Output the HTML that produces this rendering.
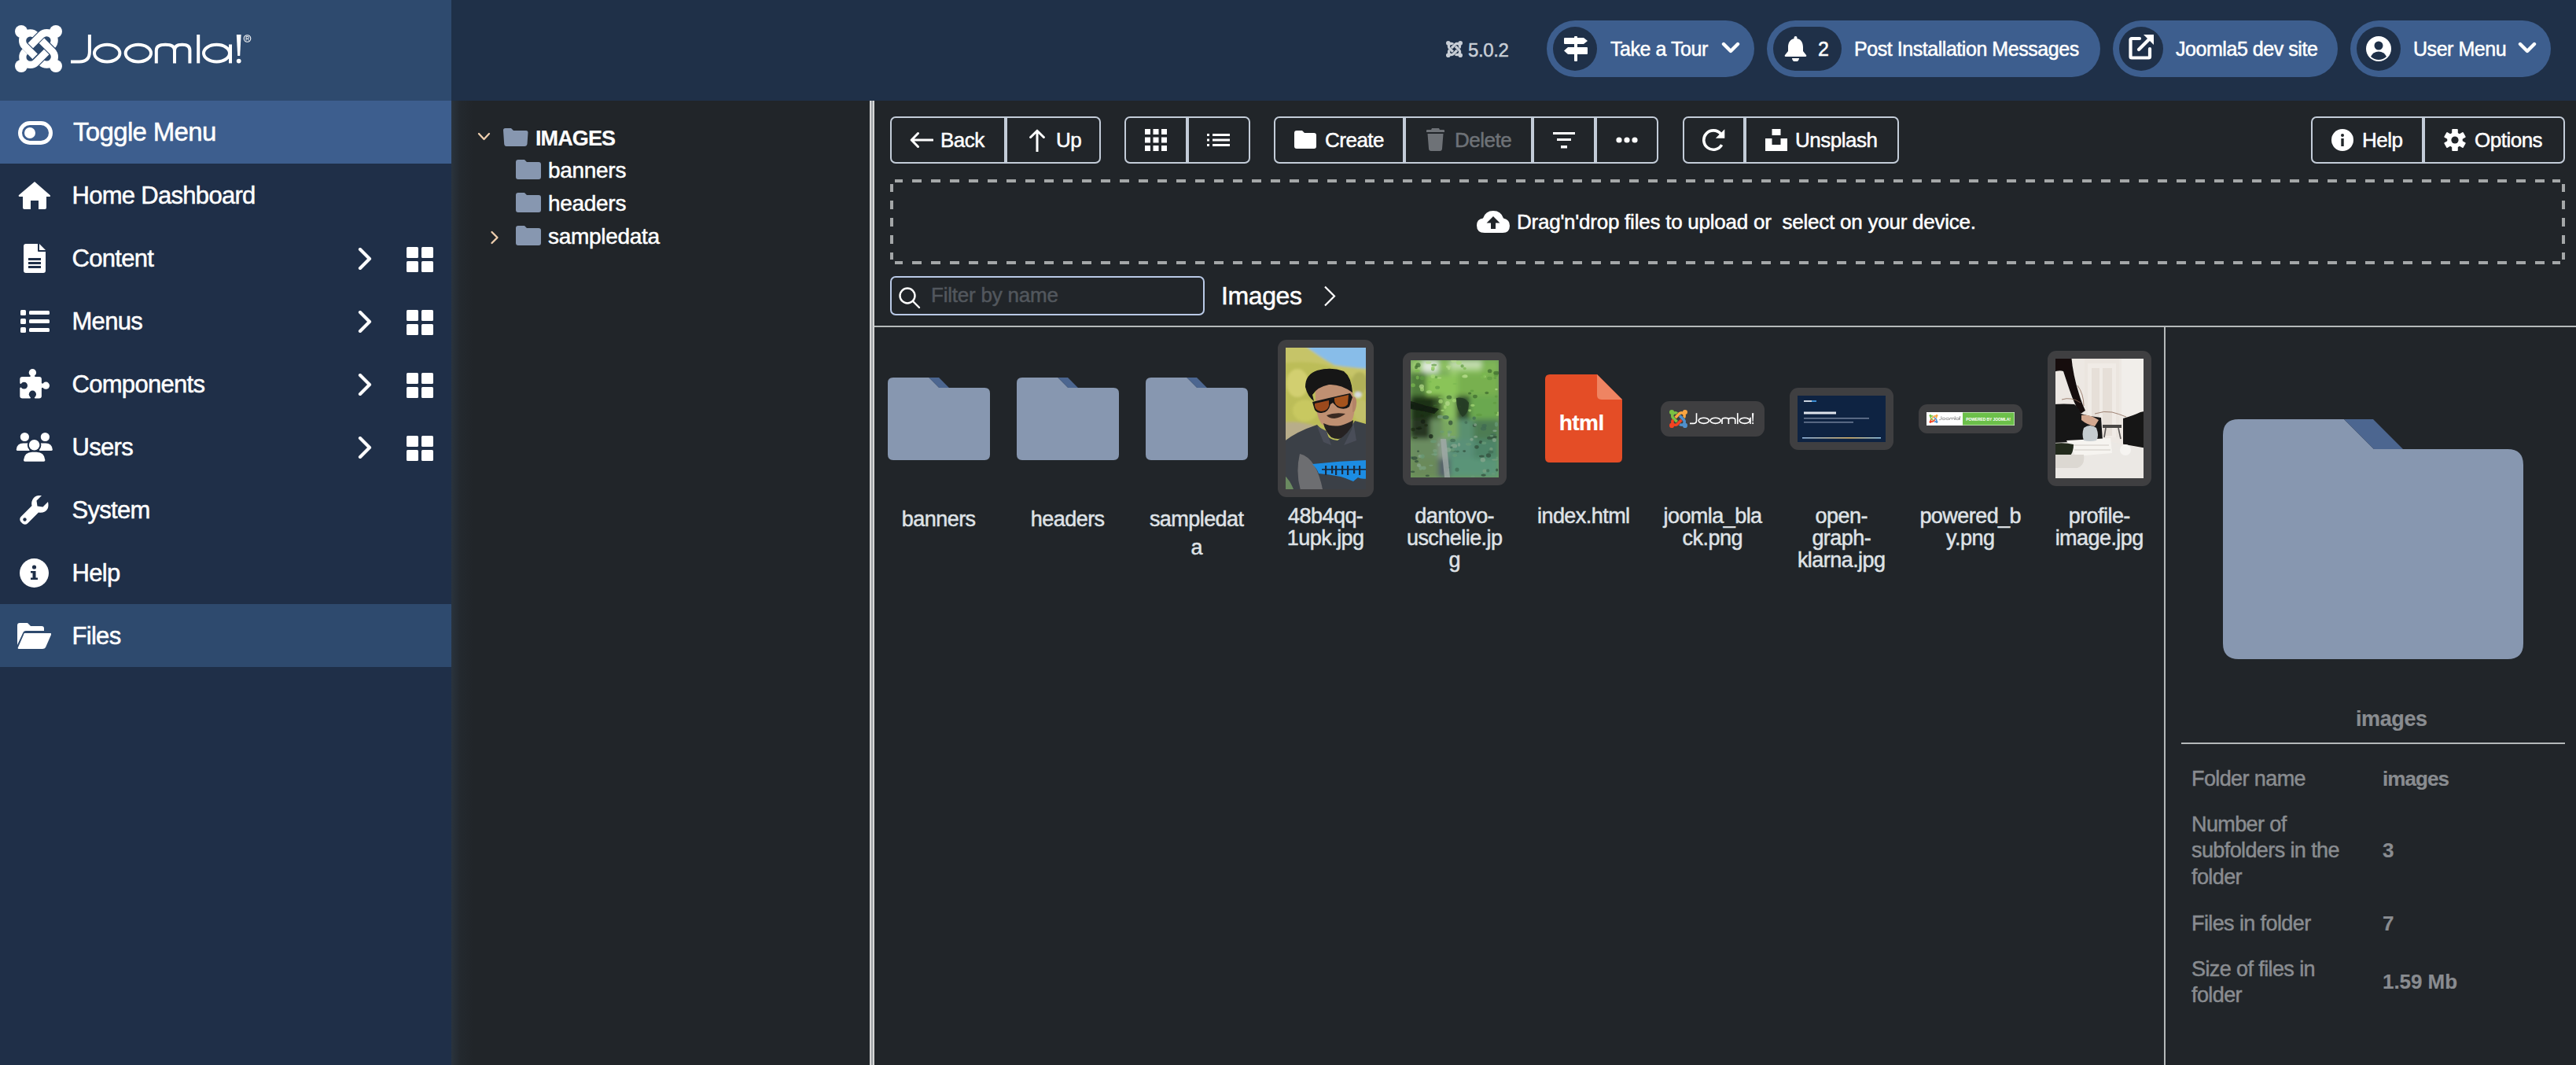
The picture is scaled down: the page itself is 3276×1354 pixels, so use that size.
<!DOCTYPE html><html><head><meta charset="utf-8"><style>
html,body{margin:0;padding:0;width:3276px;height:1354px;overflow:hidden;background:#212529;}
.r{position:absolute;display:block;}
.t{position:absolute;white-space:nowrap;font-family:"Liberation Sans",sans-serif;}
</style></head><body>
<div class="r" style="left:0px;top:0px;width:574px;height:128px;background:#2e4a6e;"></div>
<div class="r" style="left:574px;top:0px;width:2702px;height:128px;background:#1f3048;"></div>
<div class="r" style="left:0px;top:128px;width:574px;height:1226px;background:#1f2f48;"></div>
<div class="r" style="left:0px;top:128px;width:574px;height:80px;background:#3d5e8e;"></div>
<div class="r" style="left:0px;top:768px;width:574px;height:80px;background:#2e4a6e;"></div>
<div class="r" style="left:574px;top:128px;width:2702px;height:1226px;background:#212529;"></div>
<div class="r" style="left:574px;top:128px;width:28px;height:1226px;background:linear-gradient(90deg,rgba(62,84,108,.3),rgba(62,84,108,.08) 40%,rgba(62,84,108,0));"></div>
<svg class="r" style="left:19px;top:32px" width="60" height="60" viewBox="0 0 60 60"><g transform="rotate(0 30 30)"><path d="M12.6 26.4 L26 39.8" fill="none" stroke="#2e4a6e" stroke-width="12"/><path d="M26.5 12.8 A9.2 9.2 0 1 0 12.4 26.6 L26 40.2" fill="none" stroke="#fff" stroke-width="9.2"/></g><g transform="rotate(90 30 30)"><path d="M12.6 26.4 L26 39.8" fill="none" stroke="#2e4a6e" stroke-width="12"/><path d="M26.5 12.8 A9.2 9.2 0 1 0 12.4 26.6 L26 40.2" fill="none" stroke="#fff" stroke-width="9.2"/></g><g transform="rotate(180 30 30)"><path d="M12.6 26.4 L26 39.8" fill="none" stroke="#2e4a6e" stroke-width="12"/><path d="M26.5 12.8 A9.2 9.2 0 1 0 12.4 26.6 L26 40.2" fill="none" stroke="#fff" stroke-width="9.2"/></g><g transform="rotate(270 30 30)"><path d="M12.6 26.4 L26 39.8" fill="none" stroke="#2e4a6e" stroke-width="12"/><path d="M26.5 12.8 A9.2 9.2 0 1 0 12.4 26.6 L26 40.2" fill="none" stroke="#fff" stroke-width="9.2"/></g><g transform="rotate(0 30 30)"><circle cx="8" cy="8" r="8" fill="#fff"/></g><g transform="rotate(90 30 30)"><circle cx="8" cy="8" r="8" fill="#fff"/></g><g transform="rotate(180 30 30)"><circle cx="8" cy="8" r="8" fill="#fff"/></g><g transform="rotate(270 30 30)"><circle cx="8" cy="8" r="8" fill="#fff"/></g></svg>
<svg class="r" style="left:0px;top:0px" width="330" height="100" viewBox="0 0 330 100"><g fill="none" stroke="#fff" stroke-width="4" stroke-linecap="butt"><path d="M113.9 44 V66 Q113.9 78.4 101 78.4 H90"/><ellipse cx="136.2" cy="67.6" rx="16.2" ry="10.8"/><ellipse cx="175.85" cy="67.6" rx="16.2" ry="10.8"/><path d="M198.8 80.4 V64 Q198.8 56.8 210.4 56.8 Q222 56.8 222 64 V80.4 M222 64 Q222 56.8 231.7 56.8 Q241.4 56.8 241.4 64 V80.4"/><path d="M252.2 44 V80.4"/><ellipse cx="275.5" cy="67.6" rx="16.5" ry="10.8"/><path d="M293 56.5 V80.4"/></g><path d="M300.8 44 H306.6 L305.2 71 H302.2 Z" fill="#fff"/><circle cx="303.7" cy="77.6" r="2.9" fill="#fff"/><circle cx="314.5" cy="49" r="4.3" fill="none" stroke="#fff" stroke-width="1.1"/><path d="M313 51.6 V46.4 H315 Q316.6 46.4 316.6 47.8 Q316.6 49.1 315 49.1 H313 M315 49.1 L316.6 51.6" fill="none" stroke="#fff" stroke-width="0.9"/></svg>
<svg class="r" style="left:1839px;top:52px" width="21" height="21" viewBox="0 0 21 21"><g transform="scale(0.35)"><g transform="rotate(0 30 30)"><path d="M12.6 26.4 L26 39.8" fill="none" stroke="#1f3048" stroke-width="12"/><path d="M26.5 12.8 A9.2 9.2 0 1 0 12.4 26.6 L26 40.2" fill="none" stroke="#c8ced6" stroke-width="9.2"/></g><g transform="rotate(90 30 30)"><path d="M12.6 26.4 L26 39.8" fill="none" stroke="#1f3048" stroke-width="12"/><path d="M26.5 12.8 A9.2 9.2 0 1 0 12.4 26.6 L26 40.2" fill="none" stroke="#c8ced6" stroke-width="9.2"/></g><g transform="rotate(180 30 30)"><path d="M12.6 26.4 L26 39.8" fill="none" stroke="#1f3048" stroke-width="12"/><path d="M26.5 12.8 A9.2 9.2 0 1 0 12.4 26.6 L26 40.2" fill="none" stroke="#c8ced6" stroke-width="9.2"/></g><g transform="rotate(270 30 30)"><path d="M12.6 26.4 L26 39.8" fill="none" stroke="#1f3048" stroke-width="12"/><path d="M26.5 12.8 A9.2 9.2 0 1 0 12.4 26.6 L26 40.2" fill="none" stroke="#c8ced6" stroke-width="9.2"/></g><g transform="rotate(0 30 30)"><circle cx="8" cy="8" r="8" fill="#c8ced6"/></g><g transform="rotate(90 30 30)"><circle cx="8" cy="8" r="8" fill="#c8ced6"/></g><g transform="rotate(180 30 30)"><circle cx="8" cy="8" r="8" fill="#c8ced6"/></g><g transform="rotate(270 30 30)"><circle cx="8" cy="8" r="8" fill="#c8ced6"/></g></g></svg>
<div class="t" style="left:1867.0px;top:52px;font-size:24px;line-height:24px;color:#c8ced6;letter-spacing:-0.4px;-webkit-text-stroke:0.5px #c8ced6;">5.0.2</div>
<div class="r" style="left:1967px;top:26px;width:264px;height:72px;background:#3d5e8e;border-radius:36px;"></div>
<div class="r" style="left:1975px;top:34px;width:56px;height:56px;background:#1f3048;border-radius:28px;"></div>
<div class="r" style="left:2247px;top:26px;width:424px;height:72px;background:#3d5e8e;border-radius:36px;"></div>
<div class="r" style="left:2255px;top:34px;width:87px;height:56px;background:#1f3048;border-radius:28px;"></div>
<div class="r" style="left:2687px;top:26px;width:286px;height:72px;background:#3d5e8e;border-radius:36px;"></div>
<div class="r" style="left:2695px;top:34px;width:56px;height:56px;background:#1f3048;border-radius:28px;"></div>
<div class="r" style="left:2989px;top:26px;width:255px;height:72px;background:#3d5e8e;border-radius:36px;"></div>
<div class="r" style="left:2997px;top:34px;width:56px;height:56px;background:#1f3048;border-radius:28px;"></div>
<div class="t" style="left:2048.0px;top:50px;font-size:25px;line-height:25px;color:#fff;letter-spacing:-0.45px;-webkit-text-stroke:0.5px #fff;">Take a Tour</div>
<div class="t" style="left:2312.0px;top:50px;font-size:25px;line-height:25px;color:#fff;-webkit-text-stroke:0.5px #fff;">2</div>
<div class="t" style="left:2358.0px;top:50px;font-size:25px;line-height:25px;color:#fff;letter-spacing:-0.45px;-webkit-text-stroke:0.5px #fff;">Post Installation Messages</div>
<div class="t" style="left:2767.0px;top:50px;font-size:25px;line-height:25px;color:#fff;letter-spacing:-0.45px;-webkit-text-stroke:0.5px #fff;">Joomla5 dev site</div>
<div class="t" style="left:3069.0px;top:50px;font-size:25px;line-height:25px;color:#fff;letter-spacing:-0.45px;-webkit-text-stroke:0.5px #fff;">User Menu</div>
<svg class="r" style="left:2189px;top:53px" width="24" height="16" viewBox="0 0 24 16"><path d="M3 3 L12 12 L21 3" fill="none" stroke="#fff" stroke-width="4.4" stroke-linecap="round" stroke-linejoin="round"/></svg>
<svg class="r" style="left:3202px;top:53px" width="24" height="16" viewBox="0 0 24 16"><path d="M3 3 L12 12 L21 3" fill="none" stroke="#fff" stroke-width="4.4" stroke-linecap="round" stroke-linejoin="round"/></svg>
<svg class="r" style="left:1988px;top:46px" width="32" height="32" viewBox="0 0 32 32"><g fill="#fff"><rect x="14" y="0" width="4" height="32" rx="1"/><path d="M2 2 H26 L31 6 L26 10 H2 Q1 10 1 9 V3 Q1 2 2 2Z"/><path d="M30 14 H6 L1 18.5 L6 23 H30 Q31 23 31 22 V15 Q31 14 30 14Z"/></g></svg>
<svg class="r" style="left:2269px;top:46px" width="29" height="32" viewBox="0 0 29 32"><g fill="#fff"><rect x="12.5" y="0" width="4" height="5" rx="2"/><path d="M14.5 3 C7 3 5 9 5 14 V19 L1 24 Q0 26 2 26 H27 Q29 26 28 24 L24 19 V14 C24 9 22 3 14.5 3Z"/><path d="M10 28 H19 A4.5 4.5 0 0 1 10 28Z"/></g></svg>
<svg class="r" style="left:2707px;top:43px" width="33" height="33" viewBox="0 0 33 33"><g fill="none" stroke="#fff" stroke-width="4.2" stroke-linecap="round" stroke-linejoin="round"><path d="M14 6 H4 Q2.5 6 2.5 7.5 V29 Q2.5 30.5 4 30.5 H25.5 Q27 30.5 27 29 V19"/><path d="M13 20 L29 4"/></g><path d="M19 1 H32 V14 Z" fill="#fff"/></svg>
<svg class="r" style="left:3009px;top:46px" width="32" height="32" viewBox="0 0 32 32"><circle cx="16" cy="16" r="16" fill="#fff"/><circle cx="16" cy="12" r="5.5" fill="#1f3048"/><path d="M6 26 Q9 19.5 16 19.5 Q23 19.5 26 26 Q21.5 30 16 30 Q10.5 30 6 26Z" fill="#1f3048"/></svg>
<div class="t" style="left:93.0px;top:151px;font-size:33px;line-height:33px;color:#fff;letter-spacing:-0.66px;-webkit-text-stroke:0.5px #fff;">Toggle Menu</div>
<div class="t" style="left:91.5px;top:233px;font-size:31px;line-height:31px;color:#fff;letter-spacing:-0.7px;-webkit-text-stroke:0.5px #fff;">Home Dashboard</div>
<div class="t" style="left:91.5px;top:313px;font-size:31px;line-height:31px;color:#fff;letter-spacing:-0.7px;-webkit-text-stroke:0.5px #fff;">Content</div>
<svg class="r" style="left:455px;top:315px" width="18" height="28" viewBox="0 0 18 28"><path d="M3 2 L15 14 L3 26" fill="none" stroke="#fff" stroke-width="4.2" stroke-linecap="round" stroke-linejoin="round"/></svg>
<svg class="r" style="left:517px;top:314px" width="34" height="32" viewBox="0 0 34 32"><g fill="#fff"><rect x="0" y="0" width="15" height="14" rx="1.5"/><rect x="19" y="0" width="15" height="14" rx="1.5"/><rect x="0" y="18" width="15" height="14" rx="1.5"/><rect x="19" y="18" width="15" height="14" rx="1.5"/></g></svg>
<div class="t" style="left:91.5px;top:393px;font-size:31px;line-height:31px;color:#fff;letter-spacing:-0.7px;-webkit-text-stroke:0.5px #fff;">Menus</div>
<svg class="r" style="left:455px;top:395px" width="18" height="28" viewBox="0 0 18 28"><path d="M3 2 L15 14 L3 26" fill="none" stroke="#fff" stroke-width="4.2" stroke-linecap="round" stroke-linejoin="round"/></svg>
<svg class="r" style="left:517px;top:394px" width="34" height="32" viewBox="0 0 34 32"><g fill="#fff"><rect x="0" y="0" width="15" height="14" rx="1.5"/><rect x="19" y="0" width="15" height="14" rx="1.5"/><rect x="0" y="18" width="15" height="14" rx="1.5"/><rect x="19" y="18" width="15" height="14" rx="1.5"/></g></svg>
<div class="t" style="left:91.5px;top:473px;font-size:31px;line-height:31px;color:#fff;letter-spacing:-0.7px;-webkit-text-stroke:0.5px #fff;">Components</div>
<svg class="r" style="left:455px;top:475px" width="18" height="28" viewBox="0 0 18 28"><path d="M3 2 L15 14 L3 26" fill="none" stroke="#fff" stroke-width="4.2" stroke-linecap="round" stroke-linejoin="round"/></svg>
<svg class="r" style="left:517px;top:474px" width="34" height="32" viewBox="0 0 34 32"><g fill="#fff"><rect x="0" y="0" width="15" height="14" rx="1.5"/><rect x="19" y="0" width="15" height="14" rx="1.5"/><rect x="0" y="18" width="15" height="14" rx="1.5"/><rect x="19" y="18" width="15" height="14" rx="1.5"/></g></svg>
<div class="t" style="left:91.5px;top:553px;font-size:31px;line-height:31px;color:#fff;letter-spacing:-0.7px;-webkit-text-stroke:0.5px #fff;">Users</div>
<svg class="r" style="left:455px;top:555px" width="18" height="28" viewBox="0 0 18 28"><path d="M3 2 L15 14 L3 26" fill="none" stroke="#fff" stroke-width="4.2" stroke-linecap="round" stroke-linejoin="round"/></svg>
<svg class="r" style="left:517px;top:554px" width="34" height="32" viewBox="0 0 34 32"><g fill="#fff"><rect x="0" y="0" width="15" height="14" rx="1.5"/><rect x="19" y="0" width="15" height="14" rx="1.5"/><rect x="0" y="18" width="15" height="14" rx="1.5"/><rect x="19" y="18" width="15" height="14" rx="1.5"/></g></svg>
<div class="t" style="left:91.5px;top:633px;font-size:31px;line-height:31px;color:#fff;letter-spacing:-0.7px;-webkit-text-stroke:0.5px #fff;">System</div>
<div class="t" style="left:91.5px;top:713px;font-size:31px;line-height:31px;color:#fff;letter-spacing:-0.7px;-webkit-text-stroke:0.5px #fff;">Help</div>
<div class="t" style="left:91.5px;top:793px;font-size:31px;line-height:31px;color:#fff;letter-spacing:-0.7px;-webkit-text-stroke:0.5px #fff;">Files</div>
<svg class="r" style="left:23px;top:154px" width="44" height="30" viewBox="0 0 44 30"><rect x="2.5" y="2.5" width="39" height="25" rx="12.5" fill="none" stroke="#fff" stroke-width="5"/><circle cx="15" cy="15" r="7" fill="#fff"/></svg>
<svg class="r" style="left:23px;top:229px" width="42" height="38" viewBox="0 0 42 38"><path fill="#fff" d="M21 2 L1 19 Q0 21 2 21 H6 V35 Q6 37 8 37 H16 V26 H26 V37 H34 Q36 37 36 35 V21 H40 Q42 21 40.5 19 Z"/></svg>
<svg class="r" style="left:30px;top:310px" width="28" height="37" viewBox="0 0 28 37"><path fill="#fff" d="M3 0 H18 V9 Q18 10 19 10 H28 V34 Q28 37 25 37 H3 Q0 37 0 34 V3 Q0 0 3 0Z M20 0 L28 8 H20Z"/><g fill="#1f2f48"><rect x="6" y="18" width="16" height="3"/><rect x="6" y="23" width="16" height="3"/><rect x="6" y="28" width="16" height="3"/></g></svg>
<svg class="r" style="left:26px;top:394px" width="37" height="29" viewBox="0 0 37 29"><g fill="#fff"><rect x="0" y="0" width="7" height="7" rx="1.5"/><rect x="0" y="11" width="7" height="7" rx="1.5"/><rect x="0" y="22" width="7" height="7" rx="1.5"/><rect x="11" y="1" width="26" height="5" rx="1.5"/><rect x="11" y="12" width="26" height="5" rx="1.5"/><rect x="11" y="23" width="26" height="5" rx="1.5"/></g></svg>
<svg class="r" style="left:14px;top:460px" width="60" height="60" viewBox="0 0 60 60"><g fill="#fff"><rect x="11.3" y="18.9" width="27.6" height="27.6" rx="3.2"/><circle cx="27.4" cy="13.8" r="4.7"/><path d="M24.2 19.5 L25.4 16 H29.4 L30.6 19.5Z"/><circle cx="44.4" cy="30.2" r="4.6"/><path d="M38.4 27 L42 28.2 V32.2 L38.4 33.4Z"/></g><g fill="#1f2f48"><circle cx="16.6" cy="30.2" r="4.4"/><path d="M10 27 L13.2 28.2 V32.2 L10 33.4Z"/><circle cx="27.4" cy="41.2" r="4.6"/><path d="M24.2 47.5 L25.4 44 H29.4 L30.6 47.5Z"/></g></svg>
<svg class="r" style="left:14px;top:544px" width="60" height="50" viewBox="0 0 60 50"><g fill="#fff"><circle cx="17.4" cy="11.5" r="5.6"/><circle cx="43.4" cy="11.5" r="5.6"/><path d="M6.8 27.4 Q7.6 19.5 15.6 19.5 H23.5 V28.9 H8.3 Q6.8 28.9 6.8 27.4Z"/><path d="M52.8 27.4 Q52 19.5 44 19.5 H36.1 V28.9 H51.3 Q52.8 28.9 52.8 27.4Z"/></g><circle cx="29.6" cy="21.8" r="8.8" fill="#1f2f48"/><g fill="#fff"><circle cx="29.6" cy="21.8" r="6.8"/><path d="M16 41 Q17 30.8 27 30.8 H32.4 Q42.4 30.8 43.4 41 Q43.4 42.7 41.7 42.7 H17.7 Q16 42.7 16 41Z"/></g></svg>
<svg class="r" style="left:25px;top:630px" width="37" height="37" viewBox="0 0 37 37"><path fill="#fff" d="M36 8 L29.5 14.5 L22.5 13.5 L21.5 6.5 L28 0 Q20 -1 16.5 5 Q14.5 9 15.5 13 L1.5 27 Q-1 30 1.5 33.5 L3.5 35.5 Q7 38 10 35.5 L24 21.5 Q28 22.5 32 20.5 Q38 17 36 8Z"/><circle cx="6.5" cy="30.5" r="2.2" fill="#1f2f48"/></svg>
<svg class="r" style="left:25px;top:710px" width="37" height="37" viewBox="0 0 37 37"><circle cx="18.5" cy="18.5" r="18.5" fill="#fff"/><g fill="#1f2f48"><circle cx="18.5" cy="11" r="2.6"/><path d="M14 16 H20.5 V24.5 H23 V27 H14 V24.5 H16.5 V18.5 H14Z"/></g></svg>
<svg class="r" style="left:22px;top:792px" width="43" height="33" viewBox="0 0 43 33"><g fill="#fff"><path d="M0 3 Q0 0 3 0 H13 L17 4 H31 Q34 4 34 7 V10 H11 Q8 10 7 13 L0 28Z"/><path d="M9 13 H42 Q44 13 43 15 L36 31 Q35 33 32 33 H2 Q0 33 1 31 L8 15 Q8.5 13 9 13Z"/></g></svg>
<svg class="r" style="left:607px;top:168px" width="17" height="12" viewBox="0 0 17 12"><path d="M2 2 L8.5 9 L15 2" fill="none" stroke="#efcfae" stroke-width="2.3" stroke-linecap="round" stroke-linejoin="round"/></svg>
<svg class="r" style="left:623px;top:293px" width="13" height="18" viewBox="0 0 13 18"><path d="M2.5 2 L9.5 9 L2.5 16" fill="none" stroke="#efcfae" stroke-width="2.3" stroke-linecap="round" stroke-linejoin="round"/></svg>
<svg class="r" style="left:640px;top:163px" width="32" height="23" viewBox="0 0 32 23"><path fill="#8797b0" d="M2.5 0 H10 L13 3 H29 Q31.5 3 31.5 5.5 L30.5 20 Q30 23 27 23 H4 Q1.5 23 1.2 20 L0 2.5 Q0 0 2.5 0Z"/></svg>
<div class="t" style="left:681.0px;top:163px;font-size:27px;line-height:27px;color:#fff;font-weight:700;letter-spacing:-0.9px;-webkit-text-stroke:0.2px #fff;">IMAGES</div>
<svg class="r" style="left:656px;top:203px" width="32" height="25" viewBox="0 0 32 25"><path fill="#8797b0" d="M3 0 H11 L14 3 H29 Q32 3 32 6 V22 Q32 25 29 25 H3 Q0 25 0 22 V3 Q0 0 3 0Z"/></svg>
<div class="t" style="left:697.0px;top:203px;font-size:28px;line-height:28px;color:#fff;letter-spacing:-0.3px;-webkit-text-stroke:0.5px #fff;">banners</div>
<svg class="r" style="left:656px;top:245px" width="32" height="25" viewBox="0 0 32 25"><path fill="#8797b0" d="M3 0 H11 L14 3 H29 Q32 3 32 6 V22 Q32 25 29 25 H3 Q0 25 0 22 V3 Q0 0 3 0Z"/></svg>
<div class="t" style="left:697.0px;top:245px;font-size:28px;line-height:28px;color:#fff;letter-spacing:-0.3px;-webkit-text-stroke:0.5px #fff;">headers</div>
<svg class="r" style="left:656px;top:287px" width="32" height="25" viewBox="0 0 32 25"><path fill="#8797b0" d="M3 0 H11 L14 3 H29 Q32 3 32 6 V22 Q32 25 29 25 H3 Q0 25 0 22 V3 Q0 0 3 0Z"/></svg>
<div class="t" style="left:697.0px;top:287px;font-size:28px;line-height:28px;color:#fff;letter-spacing:-0.3px;-webkit-text-stroke:0.5px #fff;">sampledata</div>
<div class="r" style="left:1106px;top:128px;width:6px;height:1226px;background:linear-gradient(90deg,#d6d6d6 0,#d6d6d6 2px,#9ea2a5 2px,#9ea2a5 4px,#d6d6d6 4px);"></div>
<div class="r" style="left:1132px;top:148px;width:268px;height:60px;background:transparent;box-sizing:border-box;border:2px solid #c3ccd8;border-radius:7px;"></div>
<div class="r" style="left:1277px;top:148px;width:4px;height:60px;background:#c3ccd8;"></div>
<div class="r" style="left:1430px;top:148px;width:160px;height:60px;background:transparent;box-sizing:border-box;border:2px solid #c3ccd8;border-radius:7px;"></div>
<div class="r" style="left:1508px;top:148px;width:4px;height:60px;background:#c3ccd8;"></div>
<div class="r" style="left:1620px;top:148px;width:489px;height:60px;background:transparent;box-sizing:border-box;border:2px solid #c3ccd8;border-radius:7px;"></div>
<div class="r" style="left:1784px;top:148px;width:4px;height:60px;background:#c3ccd8;"></div>
<div class="r" style="left:1947px;top:148px;width:4px;height:60px;background:#c3ccd8;"></div>
<div class="r" style="left:2027px;top:148px;width:4px;height:60px;background:#c3ccd8;"></div>
<div class="r" style="left:2140px;top:148px;width:275px;height:60px;background:transparent;box-sizing:border-box;border:2px solid #c3ccd8;border-radius:7px;"></div>
<div class="r" style="left:2217px;top:148px;width:4px;height:60px;background:#c3ccd8;"></div>
<div class="r" style="left:2939px;top:148px;width:323px;height:60px;background:transparent;box-sizing:border-box;border:2px solid #c3ccd8;border-radius:7px;"></div>
<div class="r" style="left:3080px;top:148px;width:4px;height:60px;background:#c3ccd8;"></div>
<svg class="r" style="left:1157px;top:166px" width="30" height="24" viewBox="0 0 30 24"><path d="M10.5 3.5 L2.2 12 L10.5 20.5 M2.8 12 H29" fill="none" stroke="#fff" stroke-width="3" stroke-linecap="round" stroke-linejoin="round"/></svg>
<div class="t" style="left:1196.0px;top:165px;font-size:26px;line-height:26px;color:#fff;letter-spacing:-0.5px;-webkit-text-stroke:0.5px #fff;">Back</div>
<svg class="r" style="left:1307px;top:164px" width="24" height="29" viewBox="0 0 24 29"><path d="M3.6 10.5 L12 2.2 L20.4 10.5 M12 2.8 V28.5" fill="none" stroke="#fff" stroke-width="3" stroke-linecap="round" stroke-linejoin="round"/></svg>
<div class="t" style="left:1343.0px;top:165px;font-size:26px;line-height:26px;color:#fff;letter-spacing:-0.5px;-webkit-text-stroke:0.5px #fff;">Up</div>
<svg class="r" style="left:1456px;top:164px" width="28" height="28" viewBox="0 0 28 28"><g fill="#fff"><rect x="0.0" y="0.0" width="7" height="7"/><rect x="10.5" y="0.0" width="7" height="7"/><rect x="21.0" y="0.0" width="7" height="7"/><rect x="0.0" y="10.5" width="7" height="7"/><rect x="10.5" y="10.5" width="7" height="7"/><rect x="21.0" y="10.5" width="7" height="7"/><rect x="0.0" y="21.0" width="7" height="7"/><rect x="10.5" y="21.0" width="7" height="7"/><rect x="21.0" y="21.0" width="7" height="7"/></g></svg>
<svg class="r" style="left:1535px;top:170px" width="29" height="16" viewBox="0 0 29 16"><g fill="#fff"><rect x="0" y="0" width="3" height="3"/><rect x="0" y="6.5" width="3" height="3"/><rect x="0" y="13" width="3" height="3"/><rect x="7" y="0" width="22" height="3"/><rect x="7" y="6.5" width="22" height="3"/><rect x="7" y="13" width="22" height="3"/></g></svg>
<svg class="r" style="left:1646px;top:166px" width="28" height="23" viewBox="0 0 28 23"><path fill="#fff" d="M3 0 H10 L13 3 H25 Q28 3 28 6 V20 Q28 23 25 23 H3 Q0 23 0 20 V3 Q0 0 3 0Z"/></svg>
<div class="t" style="left:1685.0px;top:165px;font-size:26px;line-height:26px;color:#fff;letter-spacing:-0.5px;-webkit-text-stroke:0.5px #fff;">Create</div>
<svg class="r" style="left:1814px;top:163px" width="23" height="29" viewBox="0 0 23 29"><g fill="#6e7277"><path d="M7 0 H16 L17 2 H22 Q23 2 23 3 V5 H0 V3 Q0 2 1 2 H6Z"/><path d="M1.5 7 H21.5 L20 26 Q19.8 29 17 29 H6 Q3.2 29 3 26Z"/></g></svg>
<div class="t" style="left:1850.0px;top:165px;font-size:26px;line-height:26px;color:#6e7277;letter-spacing:-0.5px;-webkit-text-stroke:0.5px #6e7277;">Delete</div>
<svg class="r" style="left:1975px;top:168px" width="28" height="21" viewBox="0 0 28 21"><g fill="#fff"><rect x="0" y="0" width="28" height="3"/><rect x="5" y="8" width="18" height="3"/><rect x="10" y="17" width="8" height="3.5"/></g></svg>
<svg class="r" style="left:2055px;top:174px" width="28" height="8" viewBox="0 0 28 8"><g fill="#fff"><circle cx="4" cy="4" r="3.6"/><circle cx="14" cy="4" r="3.6"/><circle cx="24" cy="4" r="3.6"/></g></svg>
<svg class="r" style="left:2164px;top:163px" width="30" height="30" viewBox="0 0 30 30"><path d="M24.3 7.2 A12.2 12.2 0 1 0 25.6 21.1" fill="none" stroke="#fff" stroke-width="3.6"/><path d="M17.8 12.7 H29.3 V1.3 Z" fill="#fff"/></svg>
<svg class="r" style="left:2245px;top:164px" width="28" height="28" viewBox="0 0 28 28"><g fill="#fff"><rect x="8.5" y="0" width="11" height="8"/><path d="M0 12 H8.5 V20 H19.5 V12 H28 V28 H0Z"/></g></svg>
<div class="t" style="left:2283.0px;top:165px;font-size:26px;line-height:26px;color:#fff;letter-spacing:-0.5px;-webkit-text-stroke:0.5px #fff;">Unsplash</div>
<svg class="r" style="left:2965px;top:164px" width="28" height="28" viewBox="0 0 28 28"><circle cx="14" cy="14" r="14" fill="#fff"/><g fill="#212529"><circle cx="14" cy="8" r="2"/><rect x="12.3" y="12" width="3.4" height="10"/></g></svg>
<div class="t" style="left:3004.0px;top:165px;font-size:26px;line-height:26px;color:#fff;letter-spacing:-0.5px;-webkit-text-stroke:0.5px #fff;">Help</div>
<svg class="r" style="left:3108px;top:164px" width="28" height="28" viewBox="0 0 28 28"><g fill="#fff" transform="translate(14 14)"><rect x="-3.8" y="-14" width="7.6" height="8" rx="1" transform="rotate(0)"/><rect x="-3.8" y="-14" width="7.6" height="8" rx="1" transform="rotate(60)"/><rect x="-3.8" y="-14" width="7.6" height="8" rx="1" transform="rotate(120)"/><rect x="-3.8" y="-14" width="7.6" height="8" rx="1" transform="rotate(180)"/><rect x="-3.8" y="-14" width="7.6" height="8" rx="1" transform="rotate(240)"/><rect x="-3.8" y="-14" width="7.6" height="8" rx="1" transform="rotate(300)"/><circle r="9.8"/></g><circle cx="14" cy="14" r="4.6" fill="#212529"/></svg>
<div class="t" style="left:3147.0px;top:165px;font-size:26px;line-height:26px;color:#fff;letter-spacing:-0.5px;-webkit-text-stroke:0.5px #fff;">Options</div>
<svg class="r" style="left:1132px;top:228px" width="2130" height="108" viewBox="0 0 2130 108"><g fill="#a4a7a8"><rect x="6" y="0" width="10" height="4"/><rect x="2114" y="0" width="10" height="4"/><rect x="28" y="0" width="12" height="4"/><rect x="52" y="0" width="12" height="4"/><rect x="76" y="0" width="12" height="4"/><rect x="100" y="0" width="12" height="4"/><rect x="124" y="0" width="12" height="4"/><rect x="148" y="0" width="12" height="4"/><rect x="172" y="0" width="12" height="4"/><rect x="196" y="0" width="12" height="4"/><rect x="220" y="0" width="12" height="4"/><rect x="244" y="0" width="12" height="4"/><rect x="268" y="0" width="12" height="4"/><rect x="292" y="0" width="12" height="4"/><rect x="316" y="0" width="12" height="4"/><rect x="340" y="0" width="12" height="4"/><rect x="364" y="0" width="12" height="4"/><rect x="388" y="0" width="12" height="4"/><rect x="412" y="0" width="12" height="4"/><rect x="436" y="0" width="12" height="4"/><rect x="460" y="0" width="12" height="4"/><rect x="484" y="0" width="12" height="4"/><rect x="508" y="0" width="12" height="4"/><rect x="532" y="0" width="12" height="4"/><rect x="556" y="0" width="12" height="4"/><rect x="580" y="0" width="12" height="4"/><rect x="604" y="0" width="12" height="4"/><rect x="628" y="0" width="12" height="4"/><rect x="652" y="0" width="12" height="4"/><rect x="676" y="0" width="12" height="4"/><rect x="700" y="0" width="12" height="4"/><rect x="724" y="0" width="12" height="4"/><rect x="748" y="0" width="12" height="4"/><rect x="772" y="0" width="12" height="4"/><rect x="796" y="0" width="12" height="4"/><rect x="820" y="0" width="12" height="4"/><rect x="844" y="0" width="12" height="4"/><rect x="868" y="0" width="12" height="4"/><rect x="892" y="0" width="12" height="4"/><rect x="916" y="0" width="12" height="4"/><rect x="940" y="0" width="12" height="4"/><rect x="964" y="0" width="12" height="4"/><rect x="988" y="0" width="12" height="4"/><rect x="1012" y="0" width="12" height="4"/><rect x="1036" y="0" width="12" height="4"/><rect x="1060" y="0" width="12" height="4"/><rect x="1084" y="0" width="12" height="4"/><rect x="1108" y="0" width="12" height="4"/><rect x="1132" y="0" width="12" height="4"/><rect x="1156" y="0" width="12" height="4"/><rect x="1180" y="0" width="12" height="4"/><rect x="1204" y="0" width="12" height="4"/><rect x="1228" y="0" width="12" height="4"/><rect x="1252" y="0" width="12" height="4"/><rect x="1276" y="0" width="12" height="4"/><rect x="1300" y="0" width="12" height="4"/><rect x="1324" y="0" width="12" height="4"/><rect x="1348" y="0" width="12" height="4"/><rect x="1372" y="0" width="12" height="4"/><rect x="1396" y="0" width="12" height="4"/><rect x="1420" y="0" width="12" height="4"/><rect x="1444" y="0" width="12" height="4"/><rect x="1468" y="0" width="12" height="4"/><rect x="1492" y="0" width="12" height="4"/><rect x="1516" y="0" width="12" height="4"/><rect x="1540" y="0" width="12" height="4"/><rect x="1564" y="0" width="12" height="4"/><rect x="1588" y="0" width="12" height="4"/><rect x="1612" y="0" width="12" height="4"/><rect x="1636" y="0" width="12" height="4"/><rect x="1660" y="0" width="12" height="4"/><rect x="1684" y="0" width="12" height="4"/><rect x="1708" y="0" width="12" height="4"/><rect x="1732" y="0" width="12" height="4"/><rect x="1756" y="0" width="12" height="4"/><rect x="1780" y="0" width="12" height="4"/><rect x="1804" y="0" width="12" height="4"/><rect x="1828" y="0" width="12" height="4"/><rect x="1852" y="0" width="12" height="4"/><rect x="1876" y="0" width="12" height="4"/><rect x="1900" y="0" width="12" height="4"/><rect x="1924" y="0" width="12" height="4"/><rect x="1948" y="0" width="12" height="4"/><rect x="1972" y="0" width="12" height="4"/><rect x="1996" y="0" width="12" height="4"/><rect x="2020" y="0" width="12" height="4"/><rect x="2044" y="0" width="12" height="4"/><rect x="2068" y="0" width="12" height="4"/><rect x="2092" y="0" width="12" height="4"/><rect x="6" y="104" width="10" height="4"/><rect x="2114" y="104" width="10" height="4"/><rect x="28" y="104" width="12" height="4"/><rect x="52" y="104" width="12" height="4"/><rect x="76" y="104" width="12" height="4"/><rect x="100" y="104" width="12" height="4"/><rect x="124" y="104" width="12" height="4"/><rect x="148" y="104" width="12" height="4"/><rect x="172" y="104" width="12" height="4"/><rect x="196" y="104" width="12" height="4"/><rect x="220" y="104" width="12" height="4"/><rect x="244" y="104" width="12" height="4"/><rect x="268" y="104" width="12" height="4"/><rect x="292" y="104" width="12" height="4"/><rect x="316" y="104" width="12" height="4"/><rect x="340" y="104" width="12" height="4"/><rect x="364" y="104" width="12" height="4"/><rect x="388" y="104" width="12" height="4"/><rect x="412" y="104" width="12" height="4"/><rect x="436" y="104" width="12" height="4"/><rect x="460" y="104" width="12" height="4"/><rect x="484" y="104" width="12" height="4"/><rect x="508" y="104" width="12" height="4"/><rect x="532" y="104" width="12" height="4"/><rect x="556" y="104" width="12" height="4"/><rect x="580" y="104" width="12" height="4"/><rect x="604" y="104" width="12" height="4"/><rect x="628" y="104" width="12" height="4"/><rect x="652" y="104" width="12" height="4"/><rect x="676" y="104" width="12" height="4"/><rect x="700" y="104" width="12" height="4"/><rect x="724" y="104" width="12" height="4"/><rect x="748" y="104" width="12" height="4"/><rect x="772" y="104" width="12" height="4"/><rect x="796" y="104" width="12" height="4"/><rect x="820" y="104" width="12" height="4"/><rect x="844" y="104" width="12" height="4"/><rect x="868" y="104" width="12" height="4"/><rect x="892" y="104" width="12" height="4"/><rect x="916" y="104" width="12" height="4"/><rect x="940" y="104" width="12" height="4"/><rect x="964" y="104" width="12" height="4"/><rect x="988" y="104" width="12" height="4"/><rect x="1012" y="104" width="12" height="4"/><rect x="1036" y="104" width="12" height="4"/><rect x="1060" y="104" width="12" height="4"/><rect x="1084" y="104" width="12" height="4"/><rect x="1108" y="104" width="12" height="4"/><rect x="1132" y="104" width="12" height="4"/><rect x="1156" y="104" width="12" height="4"/><rect x="1180" y="104" width="12" height="4"/><rect x="1204" y="104" width="12" height="4"/><rect x="1228" y="104" width="12" height="4"/><rect x="1252" y="104" width="12" height="4"/><rect x="1276" y="104" width="12" height="4"/><rect x="1300" y="104" width="12" height="4"/><rect x="1324" y="104" width="12" height="4"/><rect x="1348" y="104" width="12" height="4"/><rect x="1372" y="104" width="12" height="4"/><rect x="1396" y="104" width="12" height="4"/><rect x="1420" y="104" width="12" height="4"/><rect x="1444" y="104" width="12" height="4"/><rect x="1468" y="104" width="12" height="4"/><rect x="1492" y="104" width="12" height="4"/><rect x="1516" y="104" width="12" height="4"/><rect x="1540" y="104" width="12" height="4"/><rect x="1564" y="104" width="12" height="4"/><rect x="1588" y="104" width="12" height="4"/><rect x="1612" y="104" width="12" height="4"/><rect x="1636" y="104" width="12" height="4"/><rect x="1660" y="104" width="12" height="4"/><rect x="1684" y="104" width="12" height="4"/><rect x="1708" y="104" width="12" height="4"/><rect x="1732" y="104" width="12" height="4"/><rect x="1756" y="104" width="12" height="4"/><rect x="1780" y="104" width="12" height="4"/><rect x="1804" y="104" width="12" height="4"/><rect x="1828" y="104" width="12" height="4"/><rect x="1852" y="104" width="12" height="4"/><rect x="1876" y="104" width="12" height="4"/><rect x="1900" y="104" width="12" height="4"/><rect x="1924" y="104" width="12" height="4"/><rect x="1948" y="104" width="12" height="4"/><rect x="1972" y="104" width="12" height="4"/><rect x="1996" y="104" width="12" height="4"/><rect x="2020" y="104" width="12" height="4"/><rect x="2044" y="104" width="12" height="4"/><rect x="2068" y="104" width="12" height="4"/><rect x="2092" y="104" width="12" height="4"/><rect x="0" y="6" width="4" height="10"/><rect x="0" y="27" width="4" height="11"/><rect x="0" y="49" width="4" height="11"/><rect x="0" y="71" width="4" height="11"/><rect x="0" y="93" width="4" height="9"/><rect x="2126" y="6" width="4" height="10"/><rect x="2126" y="27" width="4" height="11"/><rect x="2126" y="49" width="4" height="11"/><rect x="2126" y="71" width="4" height="11"/><rect x="2126" y="93" width="4" height="9"/></g></svg>
<svg class="r" style="left:1878px;top:268px" width="42" height="28" viewBox="0 0 42 28"><path fill="#fff" d="M10 28 Q0 28 0 18.5 Q0 10.5 8 9.5 Q11 0 21 0 Q31 0 34 9.5 Q42 11 42 19 Q42 28 33 28Z"/><path fill="#212529" d="M21 7 L12.5 15.5 H18 V23 H24 V15.5 H29.5Z"/></svg>
<div class="t" style="left:1929.0px;top:269px;font-size:26px;line-height:26px;color:#fff;letter-spacing:-0.24px;-webkit-text-stroke:0.5px #fff;">Drag'n'drop files to upload or &nbsp;select on your device.</div>
<div class="r" style="left:1132px;top:351px;width:400px;height:50px;background:transparent;box-sizing:border-box;border:2px solid #b9c9e6;border-radius:7px;"></div>
<svg class="r" style="left:1142px;top:364px" width="29" height="29" viewBox="0 0 29 29"><circle cx="12" cy="12" r="9.5" fill="none" stroke="#fff" stroke-width="2.4"/><path d="M19 19 L27 27" stroke="#fff" stroke-width="2.4" stroke-linecap="round"/></svg>
<div class="t" style="left:1184.0px;top:362px;font-size:26px;line-height:26px;color:#52575d;letter-spacing:-0.21px;-webkit-text-stroke:0.5px #52575d;">Filter by name</div>
<div class="t" style="left:1553.0px;top:360px;font-size:32px;line-height:32px;color:#fff;letter-spacing:-0.4px;-webkit-text-stroke:0.5px #fff;">Images</div>
<svg class="r" style="left:1683px;top:363px" width="16" height="27" viewBox="0 0 16 27"><path d="M2 1.5 L14 13.5 L2 25.5" fill="none" stroke="#fff" stroke-width="2.2"/></svg>
<div class="r" style="left:1112px;top:414px;width:2164px;height:2px;background:#b5b9ba;"></div>
<div class="r" style="left:2752px;top:416px;width:2px;height:938px;background:#b5b9ba;"></div>
<svg class="r" style="left:1129px;top:480px" width="130" height="105" viewBox="0 0 130 105"><g transform="scale(0.3403141361256545 0.3442622950819672)"><path fill="#8797b0" d="M20 0 H154 L192 38 H362 Q382 38 382 58 V285 Q382 305 362 305 H20 Q0 305 0 285 V20 Q0 0 20 0Z"/><path fill="#4c6690" d="M154 0 H191 L229 38 H192Z"/></g></svg>
<svg class="r" style="left:1293px;top:480px" width="130" height="105" viewBox="0 0 130 105"><g transform="scale(0.3403141361256545 0.3442622950819672)"><path fill="#8797b0" d="M20 0 H154 L192 38 H362 Q382 38 382 58 V285 Q382 305 362 305 H20 Q0 305 0 285 V20 Q0 0 20 0Z"/><path fill="#4c6690" d="M154 0 H191 L229 38 H192Z"/></g></svg>
<svg class="r" style="left:1457px;top:480px" width="130" height="105" viewBox="0 0 130 105"><g transform="scale(0.3403141361256545 0.3442622950819672)"><path fill="#8797b0" d="M20 0 H154 L192 38 H362 Q382 38 382 58 V285 Q382 305 362 305 H20 Q0 305 0 285 V20 Q0 0 20 0Z"/><path fill="#4c6690" d="M154 0 H191 L229 38 H192Z"/></g></svg>
<div class="t" style="left:1146.84px;top:647px;font-size:27px;line-height:27px;color:#dfe2e6;letter-spacing:-0.55px;-webkit-text-stroke:0.5px #dfe2e6;">banners</div>
<div class="t" style="left:1310.84px;top:647px;font-size:27px;line-height:27px;color:#dfe2e6;letter-spacing:-0.55px;-webkit-text-stroke:0.5px #dfe2e6;">headers</div>
<div class="t" style="left:1461.89px;top:647px;font-size:27px;line-height:27px;color:#dfe2e6;letter-spacing:-0.55px;-webkit-text-stroke:0.5px #dfe2e6;">sampledat</div>
<div class="t" style="left:1514.44px;top:683px;font-size:27px;line-height:27px;color:#dfe2e6;-webkit-text-stroke:0.5px #dfe2e6;">a</div>
<div class="r" style="left:1625px;top:432px;width:122px;height:200px;background:#3f3f41;border-radius:11px;"></div>
<svg class="r" style="left:1635px;top:442px" width="102" height="180" viewBox="0 0 102 180"><defs><filter id="bl1" x="-5%" y="-5%" width="110%" height="110%"><feGaussianBlur stdDeviation="1.6"/></filter><filter id="bl2"><feGaussianBlur stdDeviation="0.6"/></filter><clipPath id="c1"><rect width="102" height="180"/></clipPath></defs>
<g clip-path="url(#c1)">
<rect width="102" height="180" fill="#bcbd58"/>
<g filter="url(#bl1)">
<path d="M-5 -5 H25 Q40 10 60 22 Q80 26 107 27 V60 Q95 55 90 45 Q80 30 60 25 Q35 15 -5 20Z" fill="#c6c468"/>
<path d="M22 -5 H107 V27 Q80 25 62 22 Q40 10 22 -5Z" fill="#88bde9"/>
<ellipse cx="15" cy="45" rx="14" ry="18" fill="#d2cf70"/>
<ellipse cx="25" cy="80" rx="16" ry="14" fill="#c8c860"/>
<ellipse cx="94" cy="45" rx="10" ry="14" fill="#b0b058"/>
<ellipse cx="96" cy="80" rx="10" ry="14" fill="#c2c06a"/>
<path d="M-5 95 Q15 92 40 100 L30 125 L-5 120Z" fill="#b8ad8a"/>
<ellipse cx="92" cy="60" rx="5" ry="4" fill="#d8dbe0"/>
</g>
<g filter="url(#bl2)">
<path d="M38 62 Q36 45 50 42 Q70 40 84 52 L88 72 Q88 98 72 106 Q55 108 45 96 Q38 85 38 62Z" fill="#bf9072"/>
<path d="M85 62 Q91 62 90 72 Q89 82 85 82Z" fill="#b48468"/>
<path d="M25 50 Q25 34 40 29 Q58 24 74 30 Q84 38 85 57 Q70 46 55 47 Q40 50 34 60 L36 68 Q28 62 25 50Z" fill="#121212"/>
<path d="M34 69 L55 64 L82 58 L85 63 L81 75 Q75 80 66 76 L60 70 L57 72 Q54 84 44 83 Q37 82 36 76Z" fill="#141414"/>
<path d="M37 71 L55 67 L55 74 Q53 81 45 81 Q38 80 37 74Z" fill="#9b4a1e"/>
<path d="M62 64 L80 60 L79 72 Q75 77 68 75 Q62 72 62 67Z" fill="#a5521f"/>
<path d="M52 86 Q62 82 76 84 Q70 89 62 90 Q55 90 52 86Z" fill="#3a2a22"/>
<path d="M48 96 Q58 101 70 99 Q80 96 86 92 Q86 106 76 114 Q66 118 58 114 Q50 106 48 96Z" fill="#262220"/>
<path d="M-5 122 Q10 108 40 98 L46 104 Q55 118 66 118 Q80 110 88 93 L102 97 L107 100 V185 H-5Z" fill="#3b3f47"/>
<path d="M40 100 L48 120 L58 124 L52 106Z" fill="#4a4e58"/>
<path d="M86 94 L90 118 L74 124 L84 104Z" fill="#4a4e58"/>
<path d="M18 135 Q40 140 48 185 H20 Q12 160 18 135Z" fill="#7f7f7f" opacity=".75"/>
<path d="M-5 160 Q5 165 12 185 H-5Z" fill="#6a8a60"/>
</g>
<g filter="url(#bl2)">
<path d="M34 148 Q70 144 107 143 V166 Q96 168 92 165 L86 170 Q70 162 42 160 Q40 154 34 148Z" fill="#1d8ce2"/>
<g fill="#1a2a3c"><rect x="50" y="150" width="2.2" height="12"/><rect x="58" y="150" width="2.2" height="10"/><rect x="63" y="150" width="2.2" height="12"/><rect x="71" y="150" width="2.2" height="11"/><rect x="78" y="150" width="2.2" height="12"/><rect x="86" y="150" width="2.2" height="10"/><rect x="93" y="150" width="2.2" height="12"/><rect x="46" y="154" width="56" height="1.6"/></g>
</g>
</g></svg>
<div class="r" style="left:1784px;top:448px;width:132px;height:169px;background:#3f3f41;border-radius:11px;"></div>
<svg class="r" style="left:1794px;top:458px" width="112" height="149" viewBox="0 0 112 149"><defs><filter id="bl3" x="-10%" y="-10%" width="120%" height="120%"><feGaussianBlur stdDeviation="3"/></filter><filter id="bl3b"><feGaussianBlur stdDeviation="0.5"/></filter><clipPath id="c2"><rect width="112" height="149"/></clipPath></defs>
<g clip-path="url(#c2)"><rect width="112" height="149" fill="#6c9a5a"/>
<g filter="url(#bl3)"><rect x="0" y="0" width="15" height="15" fill="#9ccc70"/><rect x="15" y="0" width="20" height="16" fill="#dfe9da"/><rect x="35" y="0" width="15" height="15" fill="#8cc060"/><rect x="50" y="0" width="40" height="10" fill="#c2dcae"/><rect x="90" y="0" width="22" height="15" fill="#7fb656"/><rect x="50" y="10" width="40" height="8" fill="#9ccc72"/><rect x="0" y="15" width="20" height="30" fill="#4f7c3a"/><rect x="20" y="18" width="40" height="27" fill="#8ac458"/><rect x="60" y="15" width="52" height="30" fill="#78b050"/><rect x="0" y="45" width="30" height="30" fill="#1e3018"/><rect x="30" y="45" width="10" height="30" fill="#3a5a2a"/><rect x="40" y="45" width="18" height="30" fill="#8ac060"/><rect x="58" y="45" width="17" height="30" fill="#2e4a2e"/><rect x="75" y="45" width="37" height="30" fill="#6aa850"/><rect x="0" y="75" width="25" height="25" fill="#263620"/><rect x="25" y="75" width="15" height="25" fill="#6a9060"/><rect x="40" y="75" width="20" height="25" fill="#7aa860"/><rect x="60" y="75" width="20" height="25" fill="#5a9070"/><rect x="80" y="75" width="32" height="25" fill="#4d7c52"/><rect x="0" y="100" width="35" height="25" fill="#6a8c60"/><rect x="35" y="100" width="10" height="25" fill="#8a9a8c"/><rect x="45" y="100" width="35" height="25" fill="#5a9078"/><rect x="80" y="100" width="32" height="25" fill="#4e8468"/><rect x="0" y="125" width="35" height="24" fill="#6a8a5a"/><rect x="35" y="125" width="15" height="24" fill="#55626a"/><rect x="50" y="125" width="62" height="24" fill="#5a9478"/></g>
<g filter="url(#bl3b)"><ellipse cx="36.3" cy="22.5" rx="3.1" ry="1.1" fill="#b5dc8c" opacity="0.7"/><ellipse cx="10.5" cy="86.8" rx="3.8" ry="1.4" fill="#121c10" opacity="0.7"/><ellipse cx="48.6" cy="10.4" rx="1.7" ry="1.8" fill="#b5dc8c" opacity="0.7"/><ellipse cx="13.9" cy="33.3" rx="3.1" ry="2.9" fill="#b5dc8c" opacity="0.7"/><ellipse cx="65.6" cy="7.4" rx="2.1" ry="2.1" fill="#5e9a40" opacity="0.7"/><ellipse cx="32.4" cy="21.5" rx="1.8" ry="1.6" fill="#5e9a40" opacity="0.7"/><ellipse cx="11.5" cy="85.1" rx="2.0" ry="1.2" fill="#1a2a14" opacity="0.7"/><ellipse cx="7.0" cy="8.9" rx="2.0" ry="2.4" fill="#3d6a2c" opacity="0.7"/><ellipse cx="87.0" cy="69.4" rx="3.8" ry="1.7" fill="#5e9a40" opacity="0.7"/><ellipse cx="89.0" cy="104.2" rx="2.1" ry="2.1" fill="#2e4a38" opacity="0.7"/><ellipse cx="55.5" cy="51.2" rx="2.6" ry="2.2" fill="#a8d878" opacity="0.7"/><ellipse cx="13.2" cy="62.3" rx="3.4" ry="1.3" fill="#2a4020" opacity="0.7"/><ellipse cx="47.2" cy="143.3" rx="1.7" ry="2.1" fill="#6a9a78" opacity="0.7"/><ellipse cx="38.1" cy="52.2" rx="2.7" ry="2.6" fill="#a8d878" opacity="0.7"/><ellipse cx="94.1" cy="140.8" rx="2.7" ry="2.3" fill="#7aa080" opacity="0.7"/><ellipse cx="81.9" cy="46.1" rx="2.9" ry="2.4" fill="#3d6a2c" opacity="0.7"/><ellipse cx="31.9" cy="57.5" rx="3.2" ry="1.0" fill="#3d6a2c" opacity="0.7"/><ellipse cx="39.8" cy="91.0" rx="2.7" ry="1.4" fill="#6a9a78" opacity="0.7"/><ellipse cx="14.5" cy="36.9" rx="2.5" ry="2.7" fill="#a8d878" opacity="0.7"/><ellipse cx="18.6" cy="59.8" rx="2.2" ry="1.3" fill="#2a4020" opacity="0.7"/><ellipse cx="96.8" cy="41.5" rx="2.5" ry="1.7" fill="#3d6a2c" opacity="0.7"/><ellipse cx="107.3" cy="22.5" rx="1.9" ry="1.5" fill="#5e9a40" opacity="0.7"/><ellipse cx="1.4" cy="123.8" rx="2.0" ry="1.6" fill="#3f6a52" opacity="0.7"/><ellipse cx="46.9" cy="55.0" rx="2.9" ry="2.9" fill="#b5dc8c" opacity="0.7"/><ellipse cx="106.4" cy="97.6" rx="3.3" ry="1.9" fill="#2e4a38" opacity="0.7"/><ellipse cx="43.9" cy="59.4" rx="1.8" ry="2.3" fill="#a8d878" opacity="0.7"/><ellipse cx="21.3" cy="146.7" rx="2.6" ry="1.2" fill="#2e4a38" opacity="0.7"/><ellipse cx="5.9" cy="0.0" rx="1.9" ry="1.2" fill="#7ab850" opacity="0.7"/><ellipse cx="68.7" cy="10.5" rx="2.0" ry="1.8" fill="#7ab850" opacity="0.7"/><ellipse cx="107.0" cy="89.7" rx="2.7" ry="1.2" fill="#8aa890" opacity="0.7"/><ellipse cx="111.2" cy="69.4" rx="2.7" ry="1.2" fill="#a8d878" opacity="0.7"/><ellipse cx="84.0" cy="110.3" rx="2.7" ry="2.4" fill="#2e4a38" opacity="0.7"/><ellipse cx="2.6" cy="141.7" rx="2.8" ry="1.3" fill="#2e4a38" opacity="0.7"/><ellipse cx="102.4" cy="113.0" rx="2.2" ry="2.3" fill="#7aa080" opacity="0.7"/><ellipse cx="78.0" cy="38.9" rx="2.4" ry="1.3" fill="#5e9a40" opacity="0.7"/><ellipse cx="59.7" cy="116.1" rx="2.3" ry="1.4" fill="#3f6a52" opacity="0.7"/><ellipse cx="90.3" cy="121.9" rx="3.3" ry="1.5" fill="#2e4a38" opacity="0.7"/><ellipse cx="55.2" cy="108.9" rx="4.0" ry="2.6" fill="#8aa890" opacity="0.7"/><ellipse cx="29.0" cy="103.2" rx="3.9" ry="1.9" fill="#6a9a78" opacity="0.7"/><ellipse cx="107.0" cy="54.3" rx="2.1" ry="1.5" fill="#5e9a40" opacity="0.7"/><ellipse cx="37.8" cy="71.9" rx="4.0" ry="2.2" fill="#7aa080" opacity="0.7"/><ellipse cx="53.7" cy="97.3" rx="3.5" ry="1.2" fill="#7aa080" opacity="0.7"/><ellipse cx="101.9" cy="116.6" rx="3.4" ry="2.0" fill="#3f6a52" opacity="0.7"/><ellipse cx="48.6" cy="94.7" rx="1.7" ry="2.9" fill="#8aa890" opacity="0.7"/><ellipse cx="51.9" cy="110.8" rx="1.7" ry="1.3" fill="#3f6a52" opacity="0.7"/><ellipse cx="3.1" cy="88.0" rx="2.7" ry="2.3" fill="#1a2a14" opacity="0.7"/><ellipse cx="92.6" cy="146.1" rx="3.1" ry="1.7" fill="#2e4a38" opacity="0.7"/><ellipse cx="61.4" cy="3.2" rx="3.5" ry="2.5" fill="#a8d878" opacity="0.7"/><ellipse cx="59.0" cy="139.1" rx="2.6" ry="2.7" fill="#3f6a52" opacity="0.7"/><ellipse cx="3.1" cy="31.7" rx="2.8" ry="2.5" fill="#7ab850" opacity="0.7"/><ellipse cx="29.0" cy="62.4" rx="1.8" ry="2.8" fill="#2a4020" opacity="0.7"/><ellipse cx="100.5" cy="98.7" rx="3.5" ry="2.0" fill="#2e4a38" opacity="0.7"/><ellipse cx="14.6" cy="22.6" rx="2.8" ry="2.7" fill="#5e9a40" opacity="0.7"/><ellipse cx="68.2" cy="115.6" rx="1.9" ry="1.3" fill="#2e4a38" opacity="0.7"/><ellipse cx="81.2" cy="82.9" rx="2.3" ry="2.0" fill="#2e4a38" opacity="0.7"/><ellipse cx="54.0" cy="115.7" rx="3.7" ry="1.1" fill="#3f6a52" opacity="0.7"/><ellipse cx="31.0" cy="115.1" rx="2.8" ry="2.1" fill="#7aa080" opacity="0.7"/><ellipse cx="49.6" cy="91.3" rx="2.8" ry="2.0" fill="#6a9a78" opacity="0.7"/><ellipse cx="50.7" cy="79.5" rx="2.7" ry="2.9" fill="#2e4a38" opacity="0.7"/><ellipse cx="98.2" cy="140.4" rx="2.1" ry="2.1" fill="#3f6a52" opacity="0.7"/><ellipse cx="94.1" cy="20.4" rx="1.8" ry="1.9" fill="#a8d878" opacity="0.7"/><ellipse cx="75.2" cy="63.8" rx="2.0" ry="1.6" fill="#a8d878" opacity="0.7"/><ellipse cx="100.5" cy="23.0" rx="3.3" ry="2.3" fill="#5e9a40" opacity="0.7"/><ellipse cx="28.3" cy="20.5" rx="2.7" ry="2.5" fill="#a8d878" opacity="0.7"/><ellipse cx="44.6" cy="72.6" rx="4.0" ry="2.7" fill="#3f6a52" opacity="0.7"/><ellipse cx="79.1" cy="148.1" rx="2.5" ry="1.8" fill="#6a9a78" opacity="0.7"/><ellipse cx="35.7" cy="107.6" rx="1.5" ry="2.1" fill="#8aa890" opacity="0.7"/><ellipse cx="78.8" cy="57.3" rx="2.8" ry="1.6" fill="#a8d878" opacity="0.7"/><ellipse cx="12.6" cy="136.9" rx="2.1" ry="2.8" fill="#7aa080" opacity="0.7"/><ellipse cx="29.7" cy="5.9" rx="3.4" ry="1.5" fill="#5e9a40" opacity="0.7"/><ellipse cx="91.8" cy="126.6" rx="3.2" ry="2.9" fill="#8aa890" opacity="0.7"/><ellipse cx="16.7" cy="137.0" rx="2.9" ry="2.4" fill="#7aa080" opacity="0.7"/><ellipse cx="31.3" cy="119.1" rx="2.0" ry="2.8" fill="#6a9a78" opacity="0.7"/><ellipse cx="105.1" cy="94.5" rx="3.5" ry="1.2" fill="#3f6a52" opacity="0.7"/><ellipse cx="7.5" cy="128.6" rx="2.6" ry="1.7" fill="#2e4a38" opacity="0.7"/><ellipse cx="46.8" cy="136.4" rx="3.1" ry="1.1" fill="#3f6a52" opacity="0.7"/><ellipse cx="105.1" cy="144.4" rx="2.2" ry="1.4" fill="#6a9a78" opacity="0.7"/><ellipse cx="70.4" cy="79.1" rx="2.0" ry="1.9" fill="#3f6a52" opacity="0.7"/><ellipse cx="30.3" cy="119.7" rx="4.0" ry="1.1" fill="#7aa080" opacity="0.7"/><ellipse cx="82.1" cy="82.1" rx="2.0" ry="1.9" fill="#8aa890" opacity="0.7"/><ellipse cx="11.9" cy="122.0" rx="2.6" ry="2.0" fill="#8aa890" opacity="0.7"/><ellipse cx="108.7" cy="45.9" rx="2.0" ry="1.5" fill="#5e9a40" opacity="0.7"/><ellipse cx="93.2" cy="105.3" rx="3.1" ry="1.8" fill="#6a9a78" opacity="0.7"/><ellipse cx="110.0" cy="124.7" rx="1.5" ry="2.3" fill="#6a9a78" opacity="0.7"/><ellipse cx="48.2" cy="8.3" rx="3.2" ry="1.8" fill="#b5dc8c" opacity="0.7"/><ellipse cx="75.1" cy="42.0" rx="2.1" ry="1.6" fill="#3d6a2c" opacity="0.7"/><ellipse cx="20.8" cy="40.1" rx="1.5" ry="1.7" fill="#7ab850" opacity="0.7"/><ellipse cx="108.9" cy="81.5" rx="2.1" ry="2.9" fill="#6a9a78" opacity="0.7"/><ellipse cx="24.4" cy="27.3" rx="2.3" ry="1.2" fill="#7ab850" opacity="0.7"/><ellipse cx="56.3" cy="29.9" rx="2.8" ry="1.0" fill="#7ab850" opacity="0.7"/><ellipse cx="91.5" cy="21.4" rx="3.0" ry="1.8" fill="#7ab850" opacity="0.7"/><ellipse cx="34.1" cy="34.7" rx="3.0" ry="2.1" fill="#5e9a40" opacity="0.7"/><ellipse cx="73.6" cy="106.7" rx="3.7" ry="1.8" fill="#6a9a78" opacity="0.7"/><ellipse cx="80.7" cy="73.6" rx="2.2" ry="2.2" fill="#3f6a52" opacity="0.7"/><ellipse cx="4.9" cy="124.5" rx="3.7" ry="2.3" fill="#2e4a38" opacity="0.7"/><ellipse cx="15.6" cy="78.0" rx="2.8" ry="2.7" fill="#121c10" opacity="0.7"/><ellipse cx="92.6" cy="87.0" rx="3.7" ry="2.4" fill="#3f6a52" opacity="0.7"/><ellipse cx="9.5" cy="6.2" rx="3.1" ry="2.9" fill="#3d6a2c" opacity="0.7"/><ellipse cx="93.6" cy="83.2" rx="3.1" ry="2.3" fill="#3f6a52" opacity="0.7"/><ellipse cx="54.8" cy="0.5" rx="3.5" ry="2.5" fill="#b5dc8c" opacity="0.7"/><ellipse cx="100.6" cy="13.7" rx="2.8" ry="2.5" fill="#3d6a2c" opacity="0.7"/><ellipse cx="28.2" cy="11.1" rx="2.2" ry="2.5" fill="#5e9a40" opacity="0.7"/><ellipse cx="25.8" cy="96.8" rx="2.7" ry="2.7" fill="#121c10" opacity="0.7"/><ellipse cx="53.6" cy="101.9" rx="3.4" ry="2.2" fill="#3f6a52" opacity="0.7"/><ellipse cx="8.7" cy="22.0" rx="2.1" ry="2.5" fill="#7ab850" opacity="0.7"/><ellipse cx="69.6" cy="19.9" rx="2.7" ry="2.0" fill="#a8d878" opacity="0.7"/><ellipse cx="77.5" cy="100.7" rx="2.2" ry="2.0" fill="#8aa890" opacity="0.7"/><ellipse cx="52.2" cy="114.3" rx="4.0" ry="2.1" fill="#6a9a78" opacity="0.7"/><ellipse cx="109.6" cy="139.5" rx="1.5" ry="1.9" fill="#2e4a38" opacity="0.7"/><ellipse cx="108.4" cy="67.0" rx="2.2" ry="1.4" fill="#5e9a40" opacity="0.7"/><ellipse cx="8.4" cy="13.5" rx="3.4" ry="1.5" fill="#7ab850" opacity="0.7"/><ellipse cx="14.9" cy="122.2" rx="2.8" ry="2.8" fill="#6a9a78" opacity="0.7"/><ellipse cx="25.9" cy="133.8" rx="2.7" ry="1.0" fill="#7aa080" opacity="0.7"/><ellipse cx="106.4" cy="101.6" rx="2.5" ry="2.5" fill="#8aa890" opacity="0.7"/><ellipse cx="38.5" cy="47.1" rx="3.6" ry="1.0" fill="#7ab850" opacity="0.7"/><ellipse cx="94.0" cy="17.9" rx="3.8" ry="2.4" fill="#7ab850" opacity="0.7"/><ellipse cx="28.4" cy="9.7" rx="2.5" ry="2.7" fill="#a8d878" opacity="0.7"/><ellipse cx="40.4" cy="63.8" rx="2.2" ry="1.1" fill="#a8d878" opacity="0.7"/><ellipse cx="5.8" cy="98.6" rx="3.1" ry="1.3" fill="#2a4020" opacity="0.7"/><ellipse cx="48.9" cy="47.0" rx="3.4" ry="2.6" fill="#3d6a2c" opacity="0.7"/><ellipse cx="99.0" cy="121.0" rx="3.1" ry="2.8" fill="#2e4a38" opacity="0.7"/><ellipse cx="61.5" cy="107.2" rx="1.6" ry="2.5" fill="#8aa890" opacity="0.7"/><ellipse cx="68.9" cy="20.6" rx="3.7" ry="2.0" fill="#b5dc8c" opacity="0.7"/><ellipse cx="14.3" cy="70.4" rx="2.4" ry="1.6" fill="#1a2a14" opacity="0.7"/><ellipse cx="82.7" cy="97.3" rx="2.5" ry="1.5" fill="#8aa890" opacity="0.7"/><ellipse cx="62.4" cy="58.8" rx="1.9" ry="1.3" fill="#5e9a40" opacity="0.7"/><ellipse cx="56.1" cy="121.0" rx="2.9" ry="1.9" fill="#6a9a78" opacity="0.7"/><ellipse cx="111.6" cy="67.0" rx="1.8" ry="1.4" fill="#a8d878" opacity="0.7"/><ellipse cx="19.6" cy="82.8" rx="2.3" ry="1.7" fill="#1a2a14" opacity="0.7"/><ellipse cx="22.6" cy="3.0" rx="3.7" ry="1.8" fill="#b5dc8c" opacity="0.7"/><ellipse cx="23.5" cy="40.3" rx="3.4" ry="2.0" fill="#b5dc8c" opacity="0.7"/><ellipse cx="108.4" cy="18.8" rx="2.8" ry="2.3" fill="#5e9a40" opacity="0.7"/><ellipse cx="10.4" cy="133.6" rx="2.5" ry="2.3" fill="#8aa890" opacity="0.7"/><ellipse cx="106.8" cy="126.5" rx="3.7" ry="1.0" fill="#7aa080" opacity="0.7"/><ellipse cx="47.6" cy="113.8" rx="3.5" ry="2.9" fill="#8aa890" opacity="0.7"/><ellipse cx="0.0" cy="58.3" rx="3.8" ry="2.7" fill="#2a4020" opacity="0.7"/><ellipse cx="108.9" cy="37.0" rx="1.8" ry="1.3" fill="#b5dc8c" opacity="0.7"/><ellipse cx="108.9" cy="16.2" rx="3.6" ry="2.4" fill="#3d6a2c" opacity="0.7"/><ellipse cx="9.5" cy="115.8" rx="1.5" ry="1.3" fill="#2e4a38" opacity="0.7"/><ellipse cx="103.0" cy="96.2" rx="2.3" ry="1.3" fill="#6a9a78" opacity="0.7"/>
<path d="M38 100 L45 100 L50 149 H43Z" fill="#a0aaa8" opacity=".8"/>
<path d="M0 52 Q18 58 36 62 L30 68 Q14 64 0 62Z" fill="#0e160c" opacity=".8"/>
<path d="M58 48 Q68 46 74 54 Q74 68 66 72 Q58 64 58 48Z" fill="#243a24" opacity=".9"/>
</g></g></svg>
<svg class="r" style="left:1965px;top:476px" width="98" height="112" viewBox="0 0 98 112"><path d="M6 0 H66 L98 32 V106 Q98 112 92 112 H6 Q0 112 0 106 V6 Q0 0 6 0Z" fill="#e44d26"/>
<path d="M66 0 L98 32 H72 Q66 32 66 26Z" fill="#ef8462"/></svg>
<div class="t" style="left:1982.75px;top:524px;font-size:28px;line-height:28px;color:#fff;font-weight:700;letter-spacing:-0.54px;-webkit-text-stroke:0.2px #fff;">html</div>
<div class="r" style="left:2112px;top:510px;width:132px;height:45px;background:#3f3f41;border-radius:11px;"></div>
<svg class="r" style="left:2123px;top:521px" width="23" height="23" viewBox="0 0 23 23"><g transform="scale(0.38333333333333336)"><g transform="rotate(0 30 30)"><path d="M12.6 26.4 L26 39.8" fill="none" stroke="#3f3f41" stroke-width="12"/><path d="M26.5 12.8 A9.2 9.2 0 1 0 12.4 26.6 L26 40.2" fill="none" stroke="#7ac143" stroke-width="9.2"/></g><g transform="rotate(90 30 30)"><path d="M12.6 26.4 L26 39.8" fill="none" stroke="#3f3f41" stroke-width="12"/><path d="M26.5 12.8 A9.2 9.2 0 1 0 12.4 26.6 L26 40.2" fill="none" stroke="#f9a541" stroke-width="9.2"/></g><g transform="rotate(180 30 30)"><path d="M12.6 26.4 L26 39.8" fill="none" stroke="#3f3f41" stroke-width="12"/><path d="M26.5 12.8 A9.2 9.2 0 1 0 12.4 26.6 L26 40.2" fill="none" stroke="#5091cd" stroke-width="9.2"/></g><g transform="rotate(270 30 30)"><path d="M12.6 26.4 L26 39.8" fill="none" stroke="#3f3f41" stroke-width="12"/><path d="M26.5 12.8 A9.2 9.2 0 1 0 12.4 26.6 L26 40.2" fill="none" stroke="#f44321" stroke-width="9.2"/></g><g transform="rotate(0 30 30)"><circle cx="8" cy="8" r="8" fill="#7ac143"/></g><g transform="rotate(90 30 30)"><circle cx="8" cy="8" r="8" fill="#f9a541"/></g><g transform="rotate(180 30 30)"><circle cx="8" cy="8" r="8" fill="#5091cd"/></g><g transform="rotate(270 30 30)"><circle cx="8" cy="8" r="8" fill="#f44321"/></g></g></svg>
<svg class="r" style="left:2149px;top:525px" width="86" height="15" viewBox="0 0 86 15"><g transform="scale(0.375) translate(-90 -43)"><g fill="none" stroke="#fff" stroke-width="4.4"><path d="M112.7 43.4 V68 Q112.7 78.6 102 78.6 H90"/><ellipse cx="137.4" cy="69.2" rx="17.6" ry="9.4"/><ellipse cx="177" cy="69.2" rx="17.6" ry="9.4"/><path d="M199.3 80.6 V66 Q199.3 59.9 210.5 59.9 Q221.6 59.9 221.6 66 V80.6 M221.6 66 Q221.6 59.9 232.8 59.9 Q244 59.9 244 66 V80.6"/><path d="M252 43.4 V80.6"/><ellipse cx="276" cy="69.2" rx="17.5" ry="9.4"/><path d="M295.5 58 V80.6"/></g><path d="M300.6 43.4 H306.8 L305 72 H302.4 Z" fill="#fff"/><circle cx="303.7" cy="77.8" r="2.9" fill="#fff"/></g></svg>
<div class="r" style="left:2276px;top:493px;width:132px;height:79px;background:#3f3f41;border-radius:11px;"></div>
<svg class="r" style="left:2286px;top:503px" width="112" height="59" viewBox="0 0 112 59"><rect width="112" height="59" fill="#0e2342"/>
<rect x="8" y="6" width="10" height="2" fill="#c8d2e0"/><rect x="18" y="6" width="6" height="2" fill="#3b8bd0"/>
<rect x="8" y="20.5" width="41" height="3" fill="#dfe4ec"/>
<rect x="8" y="28" width="83" height="1.6" fill="#6a7a94"/>
<rect x="8" y="33" width="63" height="1.6" fill="#6a7a94"/>
<defs><linearGradient id="kg" x1="0" x2="1"><stop offset="0" stop-color="#9cc0e8"/><stop offset=".6" stop-color="#e8c070"/><stop offset="1" stop-color="#9cd0f0"/></linearGradient></defs>
<rect x="6" y="53" width="100" height="1.5" fill="url(#kg)"/></svg>
<div class="r" style="left:2440px;top:514px;width:132px;height:37px;background:#3f3f41;border-radius:11px;"></div>
<svg class="r" style="left:2450px;top:524px" width="112" height="17" viewBox="0 0 112 17"><rect width="112" height="17" fill="#fff"/><rect x="46" y="0.5" width="65.5" height="16" fill="#6cc04a"/>
<g transform="translate(3.5 3) scale(0.18333333333333332)"><g transform="rotate(0 30 30)"><path d="M12.6 26.4 L26 39.8" fill="none" stroke="#fff" stroke-width="12"/><path d="M26.5 12.8 A9.2 9.2 0 1 0 12.4 26.6 L26 40.2" fill="none" stroke="#7ac143" stroke-width="9.2"/></g><g transform="rotate(90 30 30)"><path d="M12.6 26.4 L26 39.8" fill="none" stroke="#fff" stroke-width="12"/><path d="M26.5 12.8 A9.2 9.2 0 1 0 12.4 26.6 L26 40.2" fill="none" stroke="#f9a541" stroke-width="9.2"/></g><g transform="rotate(180 30 30)"><path d="M12.6 26.4 L26 39.8" fill="none" stroke="#fff" stroke-width="12"/><path d="M26.5 12.8 A9.2 9.2 0 1 0 12.4 26.6 L26 40.2" fill="none" stroke="#5091cd" stroke-width="9.2"/></g><g transform="rotate(270 30 30)"><path d="M12.6 26.4 L26 39.8" fill="none" stroke="#fff" stroke-width="12"/><path d="M26.5 12.8 A9.2 9.2 0 1 0 12.4 26.6 L26 40.2" fill="none" stroke="#f44321" stroke-width="9.2"/></g><g transform="rotate(0 30 30)"><circle cx="8" cy="8" r="8" fill="#7ac143"/></g><g transform="rotate(90 30 30)"><circle cx="8" cy="8" r="8" fill="#f9a541"/></g><g transform="rotate(180 30 30)"><circle cx="8" cy="8" r="8" fill="#5091cd"/></g><g transform="rotate(270 30 30)"><circle cx="8" cy="8" r="8" fill="#f44321"/></g></g>
<g transform="translate(16 5.2) scale(0.125) translate(-90 -43)"><g fill="none" stroke="#444" stroke-width="4"><path d="M112.7 43.4 V68 Q112.7 78.6 102 78.6 H90"/><ellipse cx="137.4" cy="69.2" rx="17.6" ry="9.4"/><ellipse cx="177" cy="69.2" rx="17.6" ry="9.4"/><path d="M199.3 80.6 V66 Q199.3 59.9 210.5 59.9 Q221.6 59.9 221.6 66 V80.6 M221.6 66 Q221.6 59.9 232.8 59.9 Q244 59.9 244 66 V80.6"/><path d="M252 43.4 V80.6"/><ellipse cx="276" cy="69.2" rx="17.5" ry="9.4"/><path d="M295.5 58 V80.6"/></g><path d="M300.6 43.4 H306.8 L305 72 H302.4 Z" fill="#444"/><circle cx="303.7" cy="77.8" r="2.9" fill="#444"/></g>
<g transform="translate(78.5 11) scale(0.5)"><text x="0" y="0" font-size="10" font-family="Liberation Sans" font-weight="700" fill="#fff" text-anchor="middle" letter-spacing="-0.2">POWERED BY JOOMLA!</text></g></svg>
<div class="r" style="left:2604px;top:446px;width:132px;height:172px;background:#3f3f41;border-radius:11px;"></div>
<svg class="r" style="left:2614px;top:456px" width="112" height="152" viewBox="0 0 112 152"><defs><filter id="bl4" x="-5%" y="-5%" width="110%" height="110%"><feGaussianBlur stdDeviation="0.7"/></filter><clipPath id="c3"><rect width="112" height="152"/></clipPath></defs>
<g clip-path="url(#c3)"><rect width="112" height="152" fill="#ede8e3"/>
<g filter="url(#bl4)">
<rect x="84" y="-5" width="33" height="80" fill="#f1eeea"/>
<path d="M37 -5 H81 V100 H37Z" fill="#ebe5df"/>
<path d="M41 6 H77 V100 H41Z" fill="#f0ebe6"/>
<path d="M46 12 H56 V98 H46Z M60 12 H72 V98 H60Z" fill="#e6dfd8"/>
<path d="M-5 -5 H20 Q22 20 30 45 Q34 58 38 66 L32 70 Q24 58 18 40 Q12 22 10 16 Q4 14 -5 18Z" fill="#121010"/>
<path d="M-5 58 Q12 57 24 58 Q30 62 32 70 Q45 74 58 75 L60 104 Q40 108 -5 112Z" fill="#161414"/>
<path d="M60 84 H84 V88 H60Z" fill="#4a4644"/>
<path d="M64 88 L62 100 M80 88 L83 102" stroke="#5a5654" stroke-width="1.6"/>
<path d="M86 76 Q100 72 108 68 L117 66 V120 Q100 116 86 110Z" fill="#141212"/>
<path d="M-5 107 L60 104 L117 114 V157 H-5Z" fill="#ebe8e4"/>
<path d="M14 104 L70 101 L72 120 L26 124 Q18 112 14 104Z" fill="#f6f4f0"/>
<path d="M22 110 H68 M24 116 H70" stroke="#cfcac4" stroke-width="1"/>
<path d="M36 88 Q44 82 52 88 Q56 98 52 104 Q44 106 36 104 Q33 96 36 88Z" fill="#c5ccd0"/>
<path d="M33 72 Q42 70 55 78 L50 86 Q40 84 33 78Z" fill="#d2a890"/>
<path d="M-5 108 Q12 106 23 109 Q23 124 12 128 Q0 128 -5 124Z" fill="#232a1e"/>
<path d="M-5 122 H36 Q38 136 28 139 H-5Z" fill="#dcd8d2"/>
<circle cx="89" cy="116" r="7" fill="#f6f4f1"/>
</g>
<path d="M8 52 Q20 48 32 56 M28 34 Q36 45 36 60 M50 70 Q62 66 72 68 Q80 70 90 74" stroke="#8a6a58" stroke-width=".8" fill="none"/>
</g></svg>
<div class="t" style="left:1638.09px;top:643px;font-size:27px;line-height:27px;color:#dfe2e6;letter-spacing:-0.55px;-webkit-text-stroke:0.5px #dfe2e6;">48b4qq-</div>
<div class="t" style="left:1636.86px;top:671px;font-size:27px;line-height:27px;color:#dfe2e6;letter-spacing:-0.55px;-webkit-text-stroke:0.5px #dfe2e6;">1upk.jpg</div>
<div class="t" style="left:1799.36px;top:643px;font-size:27px;line-height:27px;color:#dfe2e6;letter-spacing:-0.55px;-webkit-text-stroke:0.5px #dfe2e6;">dantovo-</div>
<div class="t" style="left:1788.94px;top:671px;font-size:27px;line-height:27px;color:#dfe2e6;letter-spacing:-0.55px;-webkit-text-stroke:0.5px #dfe2e6;">uschelie.jp</div>
<div class="t" style="left:1842.5px;top:699px;font-size:27px;line-height:27px;color:#dfe2e6;letter-spacing:-0.55px;-webkit-text-stroke:0.5px #dfe2e6;">g</div>
<div class="t" style="left:1954.97px;top:643px;font-size:27px;line-height:27px;color:#dfe2e6;letter-spacing:-0.55px;-webkit-text-stroke:0.5px #dfe2e6;">index.html</div>
<div class="t" style="left:2115.47px;top:643px;font-size:27px;line-height:27px;color:#dfe2e6;letter-spacing:-0.55px;-webkit-text-stroke:0.5px #dfe2e6;">joomla_bla</div>
<div class="t" style="left:2139.62px;top:671px;font-size:27px;line-height:27px;color:#dfe2e6;letter-spacing:-0.55px;-webkit-text-stroke:0.5px #dfe2e6;">ck.png</div>
<div class="t" style="left:2308.6px;top:643px;font-size:27px;line-height:27px;color:#dfe2e6;letter-spacing:-0.55px;-webkit-text-stroke:0.5px #dfe2e6;">open-</div>
<div class="t" style="left:2304.38px;top:671px;font-size:27px;line-height:27px;color:#dfe2e6;letter-spacing:-0.55px;-webkit-text-stroke:0.5px #dfe2e6;">graph-</div>
<div class="t" style="left:2285.91px;top:699px;font-size:27px;line-height:27px;color:#dfe2e6;letter-spacing:-0.55px;-webkit-text-stroke:0.5px #dfe2e6;">klarna.jpg</div>
<div class="t" style="left:2441.39px;top:643px;font-size:27px;line-height:27px;color:#dfe2e6;letter-spacing:-0.55px;-webkit-text-stroke:0.5px #dfe2e6;">powered_b</div>
<div class="t" style="left:2475.1px;top:671px;font-size:27px;line-height:27px;color:#dfe2e6;letter-spacing:-0.55px;-webkit-text-stroke:0.5px #dfe2e6;">y.png</div>
<div class="t" style="left:2630.68px;top:643px;font-size:27px;line-height:27px;color:#dfe2e6;letter-spacing:-0.55px;-webkit-text-stroke:0.5px #dfe2e6;">profile-</div>
<div class="t" style="left:2613.64px;top:671px;font-size:27px;line-height:27px;color:#dfe2e6;letter-spacing:-0.55px;-webkit-text-stroke:0.5px #dfe2e6;">image.jpg</div>
<svg class="r" style="left:2827px;top:533px" width="382" height="305" viewBox="0 0 382 305"><g transform="scale(1.0 1.0)"><path fill="#8797b0" d="M20 0 H154 L192 38 H362 Q382 38 382 58 V285 Q382 305 362 305 H20 Q0 305 0 285 V20 Q0 0 20 0Z"/><path fill="#4c6690" d="M154 0 H191 L229 38 H192Z"/></g></svg>
<div class="t" style="left:2996.0px;top:901px;font-size:27px;line-height:27px;color:#898c90;font-weight:700;letter-spacing:-0.4px;-webkit-text-stroke:0.2px #898c90;">images</div>
<div class="r" style="left:2774px;top:944px;width:488px;height:2px;background:#b5b9ba;"></div>
<div class="t" style="left:2787.0px;top:977px;font-size:27px;line-height:27px;color:#898c90;letter-spacing:-0.6px;-webkit-text-stroke:0.5px #898c90;">Folder name</div>
<div class="t" style="left:3030.0px;top:977px;font-size:26px;line-height:26px;color:#898c90;font-weight:700;letter-spacing:-0.93px;-webkit-text-stroke:0.2px #898c90;">images</div>
<div class="t" style="left:2787.0px;top:1035px;font-size:27px;line-height:27px;color:#898c90;letter-spacing:-0.6px;-webkit-text-stroke:0.5px #898c90;">Number of</div>
<div class="t" style="left:2787.0px;top:1068px;font-size:27px;line-height:27px;color:#898c90;letter-spacing:-0.6px;-webkit-text-stroke:0.5px #898c90;">subfolders in the</div>
<div class="t" style="left:2787.0px;top:1102px;font-size:27px;line-height:27px;color:#898c90;letter-spacing:-0.6px;-webkit-text-stroke:0.5px #898c90;">folder</div>
<div class="t" style="left:3030.0px;top:1068px;font-size:26px;line-height:26px;color:#898c90;font-weight:700;-webkit-text-stroke:0.2px #898c90;">3</div>
<div class="t" style="left:2787.0px;top:1161px;font-size:27px;line-height:27px;color:#898c90;letter-spacing:-0.6px;-webkit-text-stroke:0.5px #898c90;">Files in folder</div>
<div class="t" style="left:3030.0px;top:1161px;font-size:26px;line-height:26px;color:#898c90;font-weight:700;-webkit-text-stroke:0.2px #898c90;">7</div>
<div class="t" style="left:2787.0px;top:1219px;font-size:27px;line-height:27px;color:#898c90;letter-spacing:-0.6px;-webkit-text-stroke:0.5px #898c90;">Size of files in</div>
<div class="t" style="left:2787.0px;top:1252px;font-size:27px;line-height:27px;color:#898c90;letter-spacing:-0.6px;-webkit-text-stroke:0.5px #898c90;">folder</div>
<div class="t" style="left:3030.0px;top:1235px;font-size:26px;line-height:26px;color:#898c90;font-weight:700;letter-spacing:-0.06px;-webkit-text-stroke:0.2px #898c90;">1.59 Mb</div>
</body></html>
